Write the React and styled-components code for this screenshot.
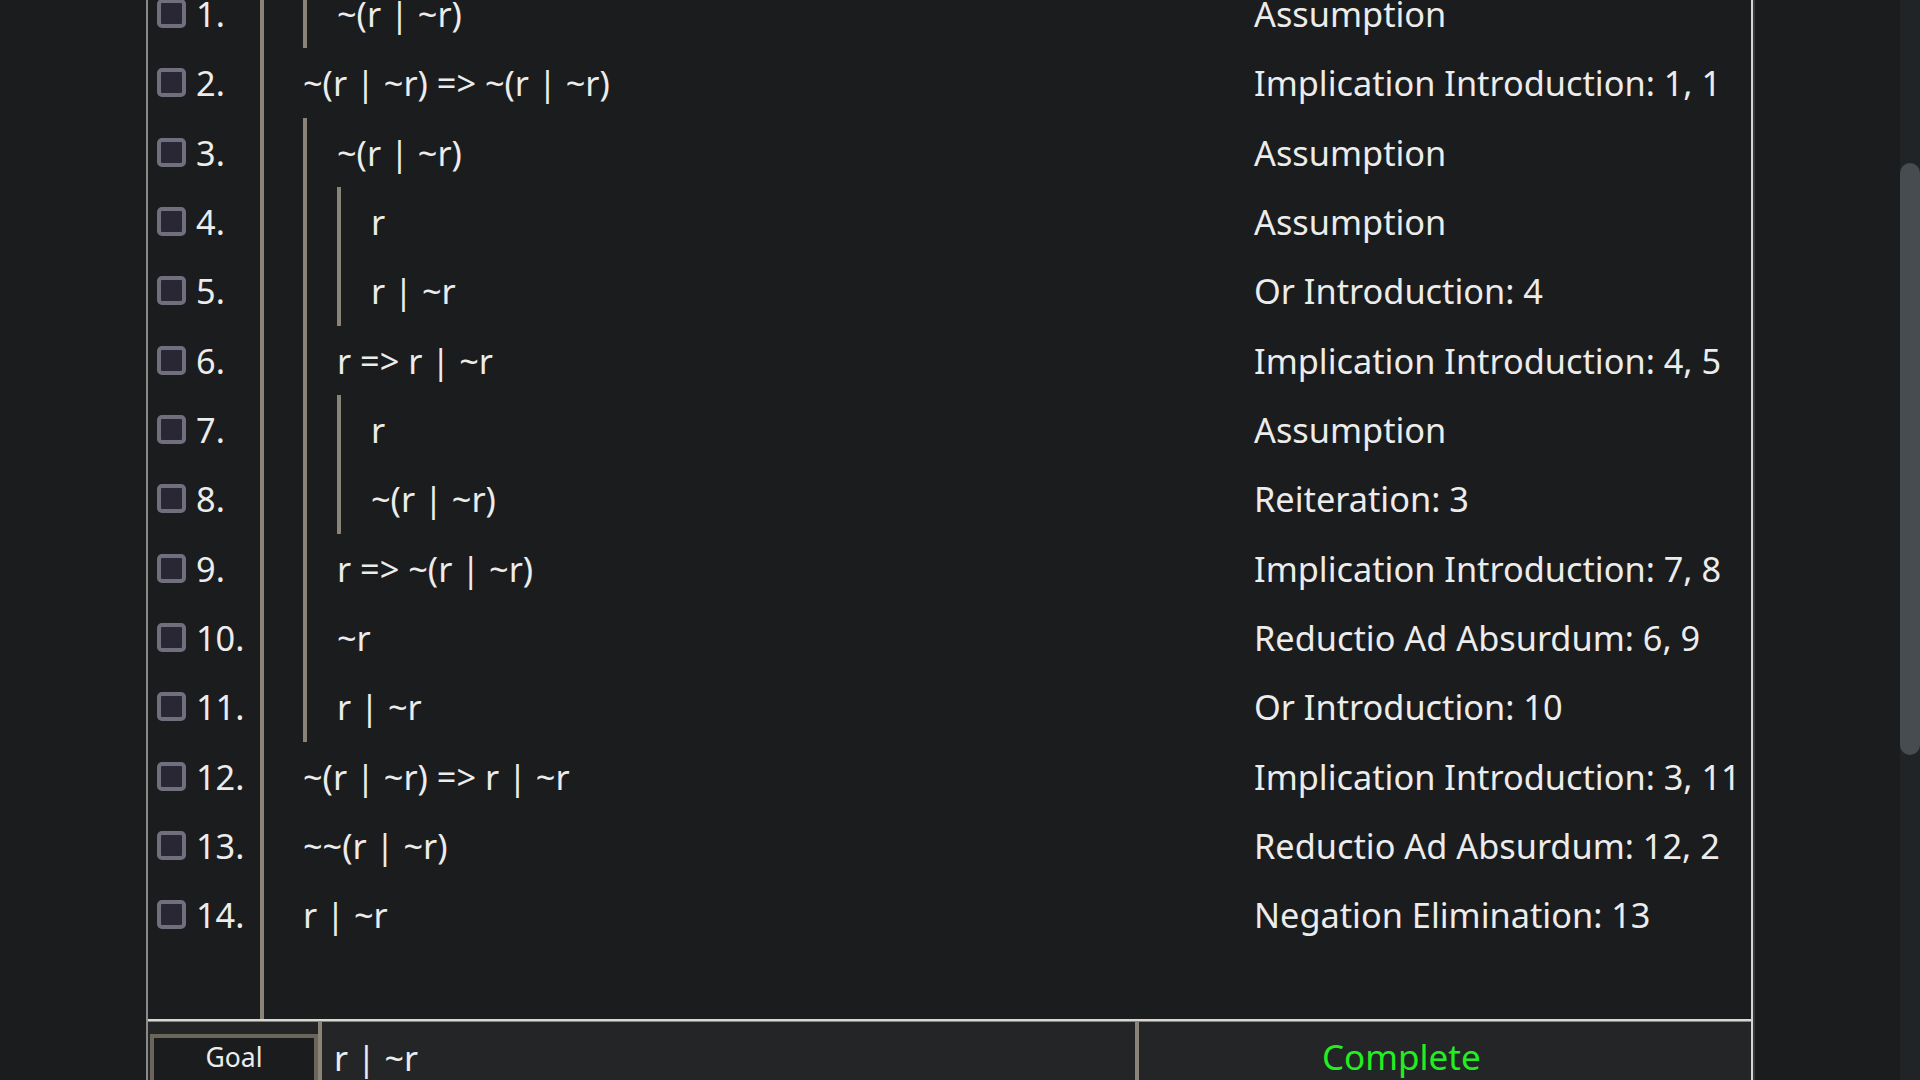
import { useLayoutEffect, useRef } from 'react'
import styled, { createGlobalStyle } from 'styled-components'

const Global = createGlobalStyle`
html, body {
  margin: 0;
  padding: 0;
  background: #1b1c1e;
  overflow: hidden;
}
`

const Shell = styled.div`
display: flex;
height: 100vh;
background: #1b1c1e;
font-family: "Noto Sans", "Open Sans", sans-serif;
color: #ececec;
`

const Viewport = styled.div`
flex: 1;
overflow-y: scroll;
scrollbar-width: none;
&::-webkit-scrollbar { display: none; }
`

const Track = styled.div`
width: 20px;
flex: none;
background: #202426;
padding-top: 163px;
box-sizing: border-box;
`

const Thumb = styled.div`
height: 592px;
border-radius: 10px;
background: #464c4f;
`

const Page = styled.div`
min-height: 1970px;
padding: 267px 0 0 146px;
box-sizing: border-box;
`

const Panel = styled.div`
width: 1603px;
border-left: 2px solid #8a8a8a;
border-right: 2px solid #d4d4d4;
box-shadow: 2px 0 0 #34393c;
`

const Proof = styled.div`
padding-top: 12px;
`

const Row = styled.div`
display: grid;
grid-template-columns: 112px 994px 1fr;
height: 69.33px;
`

const NumCell = styled.div`
display: flex;
align-items: center;
padding-left: 9px;
gap: 10px;
font-size: 34.3px;
`

const Box = styled.span`
width: 29px;
height: 29px;
box-sizing: border-box;
border: 4px solid #716f7d;
border-radius: 5px;
background: #292733;
flex: none;
`

const FormulaCell = styled.div`
display: flex;
align-items: stretch;
border-left: 4px solid #8a8378;
padding-left: 39px;
font-size: 34.3px;
white-space: pre;
`

const Bar = styled.span`
width: 34px;
flex: none;
box-sizing: border-box;
border-left: 4px solid #8a8378;
`

const Text = styled.span`
display: flex;
align-items: center;
`

const RuleCell = styled.div`
display: flex;
align-items: center;
font-size: 34.3px;
white-space: nowrap;
`

const GoalBar = styled.div`
display: grid;
grid-template-columns: 174px 817px 1fr;
height: 110px;
background: #232527;
border-top: 2px solid #d8d6d0;
box-shadow: inset 0 1px 0 #8a8378;
`

const GoalLabelCell = styled.div`
padding: 13px 0 0 2px;
border-right: 4px solid #8a8378;
`

const GoalLabel = styled.div`
height: 64px;
box-sizing: border-box;
border: 4px solid #6c655b;
background: #1b1c1e;
text-align: center;
font-size: 26.5px;
line-height: 38px;
color: #ececec;
`

const GoalText = styled.div`
padding: 14px 0 0 12px;
font-size: 34px;
line-height: 46px;
white-space: pre;
border-right: 4px solid #8a8378;
`

const Status = styled.div`
padding: 12px 0 0 183px;
font-size: 35px;
line-height: 48px;
color: ${p => (p.done ? '#22ee22' : '#ee4444')};
`

const rows = [
  { n: 1, depth: 1, f: '~(r | ~r)', rule: 'Assumption' },
  { n: 2, depth: 0, f: '~(r | ~r) => ~(r | ~r)', rule: 'Implication Introduction: 1, 1' },
  { n: 3, depth: 1, f: '~(r | ~r)', rule: 'Assumption' },
  { n: 4, depth: 2, f: 'r', rule: 'Assumption' },
  { n: 5, depth: 2, f: 'r | ~r', rule: 'Or Introduction: 4' },
  { n: 6, depth: 1, f: 'r => r | ~r', rule: 'Implication Introduction: 4, 5' },
  { n: 7, depth: 2, f: 'r', rule: 'Assumption' },
  { n: 8, depth: 2, f: '~(r | ~r)', rule: 'Reiteration: 3' },
  { n: 9, depth: 1, f: 'r => ~(r | ~r)', rule: 'Implication Introduction: 7, 8' },
  { n: 10, depth: 1, f: '~r', rule: 'Reductio Ad Absurdum: 6, 9' },
  { n: 11, depth: 1, f: 'r | ~r', rule: 'Or Introduction: 10' },
  { n: 12, depth: 0, f: '~(r | ~r) => r | ~r', rule: 'Implication Introduction: 3, 11' },
  { n: 13, depth: 0, f: '~~(r | ~r)', rule: 'Reductio Ad Absurdum: 12, 2' },
  { n: 14, depth: 0, f: 'r | ~r', rule: 'Negation Elimination: 13' },
]

function App() {
  const view = useRef(null)
  useLayoutEffect(() => {
    if (view.current) view.current.scrollTop = 300
  }, [])

  return (
    <Shell>
      <Global />
      <Viewport ref={view}>
        <Page>
          <Panel>
            <Proof>
              {rows.map((el) => (
                <Row key={el.n}>
                  <NumCell>
                    <Box />
                    {el.n}.
                  </NumCell>
                  <FormulaCell>
                    {Array.from({ length: el.depth }).map((_, i) => <Bar key={i} />)}
                    <Text>{el.f}</Text>
                  </FormulaCell>
                  <RuleCell>{el.rule}</RuleCell>
                </Row>
              ))}
              <Row>
                <NumCell />
                <FormulaCell />
                <RuleCell />
              </Row>
            </Proof>
            <GoalBar>
              <GoalLabelCell>
                <GoalLabel>Goal</GoalLabel>
              </GoalLabelCell>
              <GoalText>r | ~r</GoalText>
              <Status done>Complete</Status>
            </GoalBar>
          </Panel>
        </Page>
      </Viewport>
      <Track>
        <Thumb />
      </Track>
    </Shell>
  )
}

export default App
